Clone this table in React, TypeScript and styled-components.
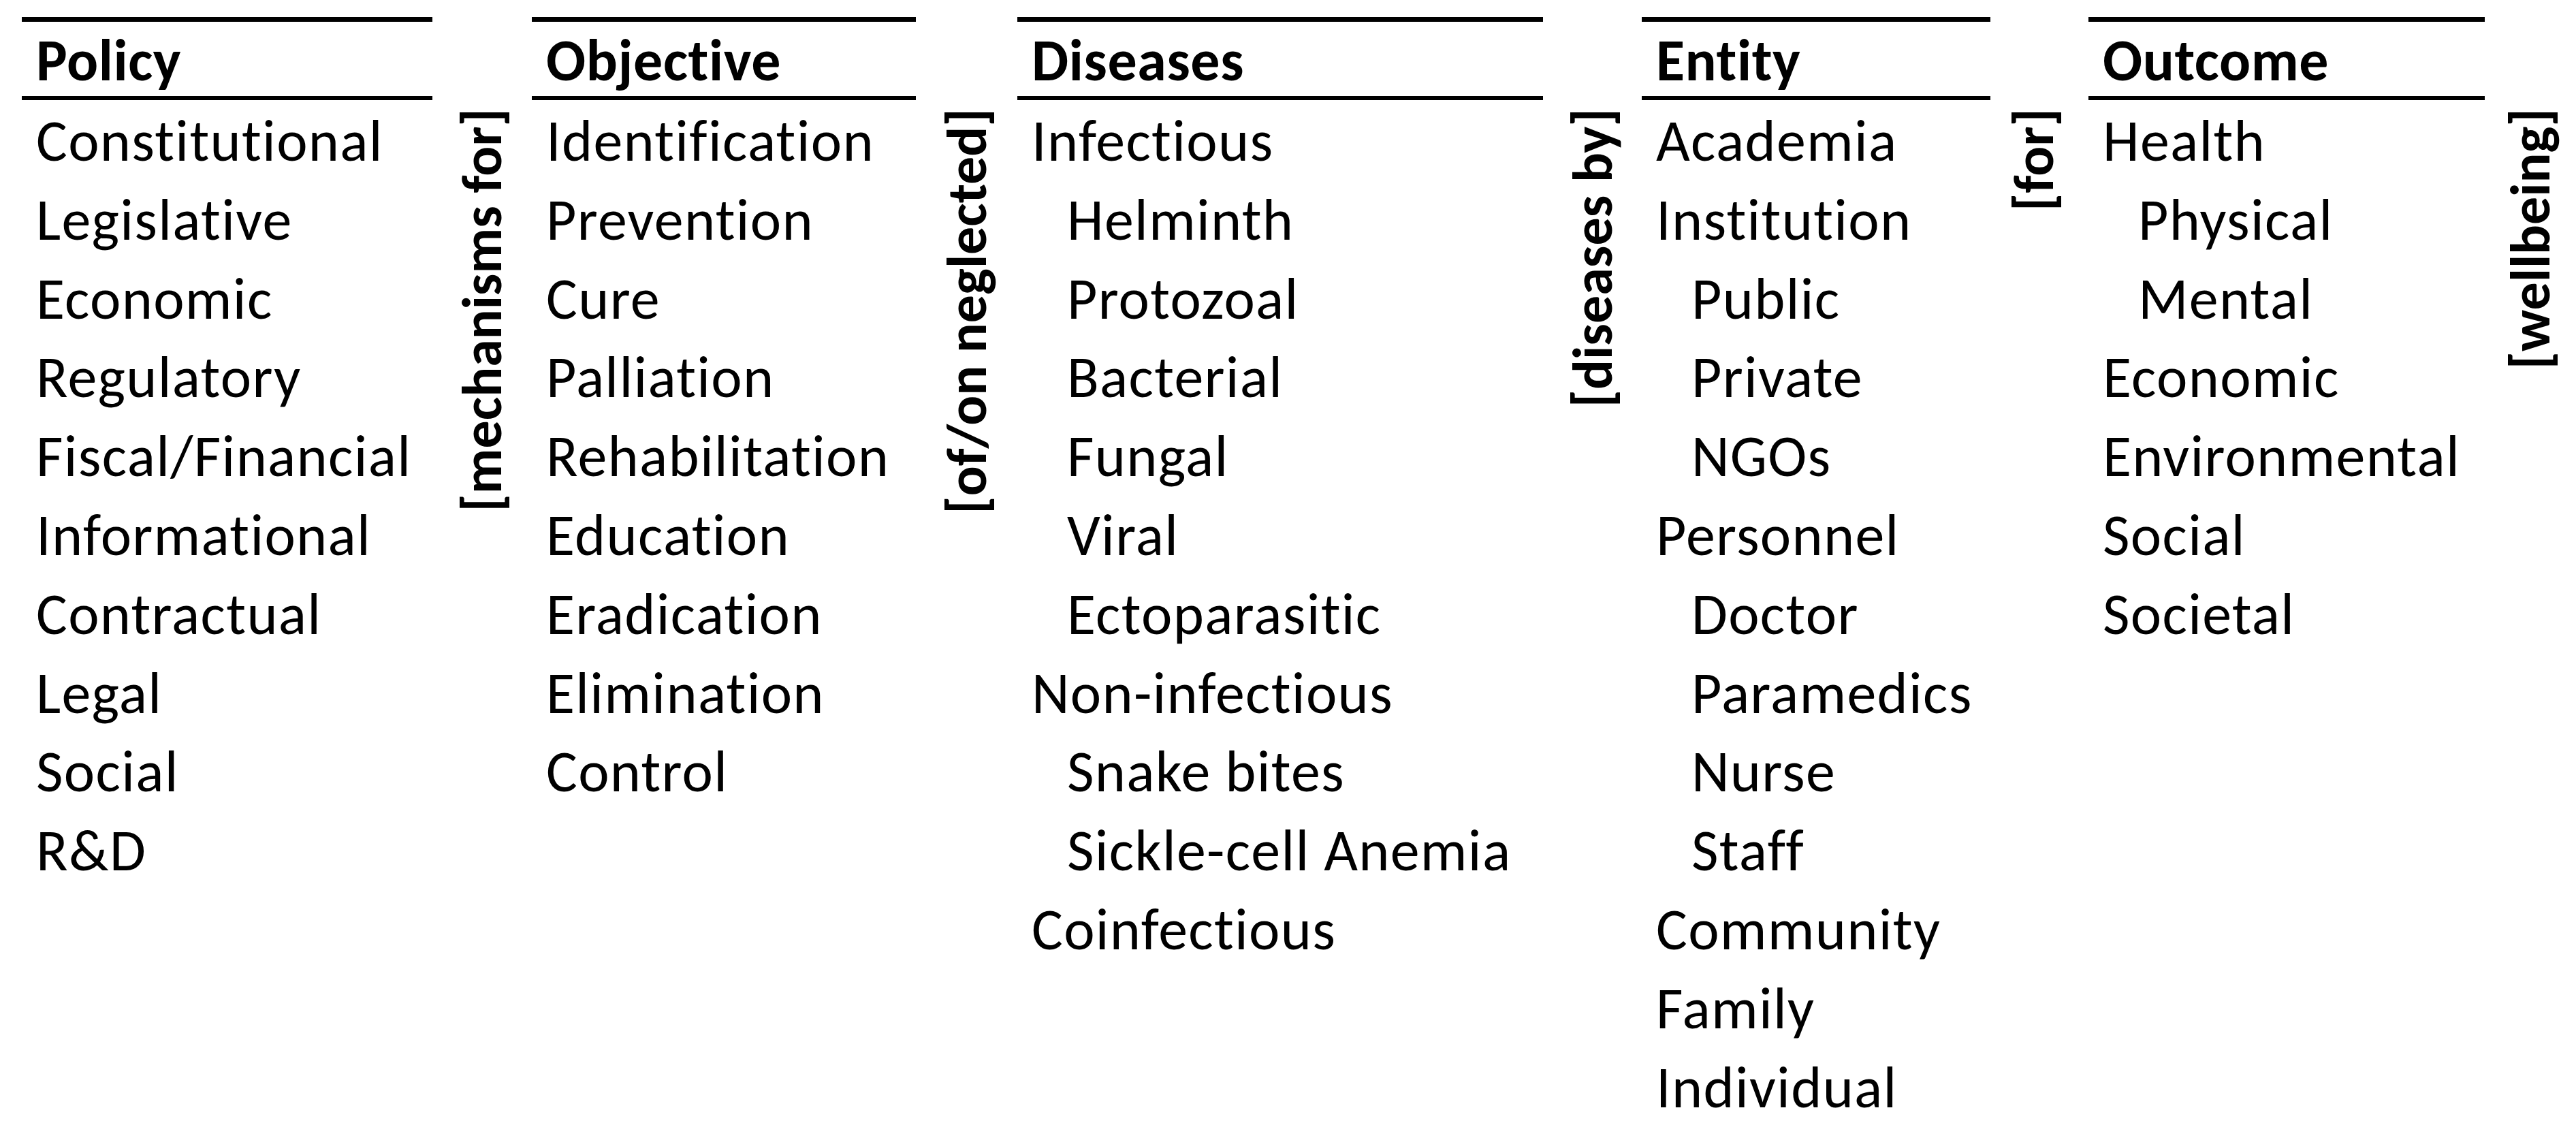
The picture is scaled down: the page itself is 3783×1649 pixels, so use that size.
import React from 'react';
import styled, { createGlobalStyle } from 'styled-components';

const Global = createGlobalStyle`
  html, body { margin: 0; padding: 0; background: #ffffff; }
  body {
    font-family: 'Carlito', 'Lato', 'Open Sans', sans-serif;
    color: #000000;
    font-variant-ligatures: none;
    font-feature-settings: "liga" 0, "clig" 0;
  }
`;

const Page = styled.main`
  display: flex;
  align-items: flex-start;
  width: 3783px;
  height: 1649px;
  box-sizing: border-box;
  padding: 25px 0 0 32px;
  overflow: hidden;
`;

const Column = styled.section<{ $w: number }>`
  flex: none;
  width: ${(p) => p.$w}px;
`;

const Header = styled.h2`
  margin: 0;
  height: 104px;
  padding: 5px 0 0 21px;
  border-top: 7px solid #000;
  border-bottom: 6px solid #000;
  font-size: 86px;
  font-weight: 700;
  line-height: 104px;
  letter-spacing: 0.6px;
  white-space: nowrap;
`;

const List = styled.ul`
  list-style: none;
  margin: 0;
  padding: 2px 0 0 21px;
  font-size: 86px;
  font-weight: 400;
  line-height: 115.8px;
  letter-spacing: 1.3px;
`;

const Item = styled.li<{ $sub?: boolean }>`
  padding-left: ${(p) => (p.$sub ? 52 : 0)}px;
  white-space: nowrap;
`;

const Connector = styled.div<{ $w: number }>`
  flex: none;
  width: ${(p) => p.$w}px;
  display: flex;
  justify-content: center;
  padding-top: 134px;
`;

const Label = styled.span<{ $shift: number }>`
  margin-left: ${(p) => p.$shift}px;
  writing-mode: vertical-rl;
  transform: rotate(180deg);
  font-size: 82px;
  font-weight: 700;
  line-height: 1;
  white-space: nowrap;
`;

type Entry = { text: string; sub?: boolean };
type Col = {
  title: string;
  width: number;
  items: Entry[];
  label: string;
  gap: number;
  shift: number;
};

const e = (text: string, sub = false): Entry => ({ text, sub });

const columns: Col[] = [
  {
    title: 'Policy',
    width: 603,
    gap: 146,
    shift: 0,
    label: '[mechanisms for]',
    items: [
      e('Constitutional'),
      e('Legislative'),
      e('Economic'),
      e('Regulatory'),
      e('Fiscal/Financial'),
      e('Informational'),
      e('Contractual'),
      e('Legal'),
      e('Social'),
      e('R&D'),
    ],
  },
  {
    title: 'Objective',
    width: 564,
    gap: 149,
    shift: 0,
    label: '[of/on neglected]',
    items: [
      e('Identification'),
      e('Prevention'),
      e('Cure'),
      e('Palliation'),
      e('Rehabilitation'),
      e('Education'),
      e('Eradication'),
      e('Elimination'),
      e('Control'),
    ],
  },
  {
    title: 'Diseases',
    width: 772,
    gap: 145,
    shift: 0,
    label: '[diseases by]',
    items: [
      e('Infectious'),
      e('Helminth', true),
      e('Protozoal', true),
      e('Bacterial', true),
      e('Fungal', true),
      e('Viral', true),
      e('Ectoparasitic', true),
      e('Non-infectious'),
      e('Snake bites', true),
      e('Sickle-cell Anemia', true),
      e('Coinfectious'),
    ],
  },
  {
    title: 'Entity',
    width: 512,
    gap: 144,
    shift: -16,
    label: '[for]',
    items: [
      e('Academia'),
      e('Institution'),
      e('Public', true),
      e('Private', true),
      e('NGOs', true),
      e('Personnel'),
      e('Doctor', true),
      e('Paramedics', true),
      e('Nurse', true),
      e('Staff', true),
      e('Community'),
      e('Family'),
      e('Individual'),
    ],
  },
  {
    title: 'Outcome',
    width: 582,
    gap: 134,
    shift: 0,
    label: '[wellbeing]',
    items: [
      e('Health'),
      e('Physical', true),
      e('Mental', true),
      e('Economic'),
      e('Environmental'),
      e('Social'),
      e('Societal'),
    ],
  },
];

export default function App() {
  return (
    <>
      <Global />
      <Page>
        {columns.map((c) => (
          <React.Fragment key={c.title}>
            <Column $w={c.width}>
              <Header>{c.title}</Header>
              <List>
                {c.items.map((it, i) => (
                  <Item key={i} $sub={it.sub}>
                    {it.text}
                  </Item>
                ))}
              </List>
            </Column>
            <Connector $w={c.gap}>
              <Label $shift={c.shift}>{c.label}</Label>
            </Connector>
          </React.Fragment>
        ))}
      </Page>
    </>
  );
}
